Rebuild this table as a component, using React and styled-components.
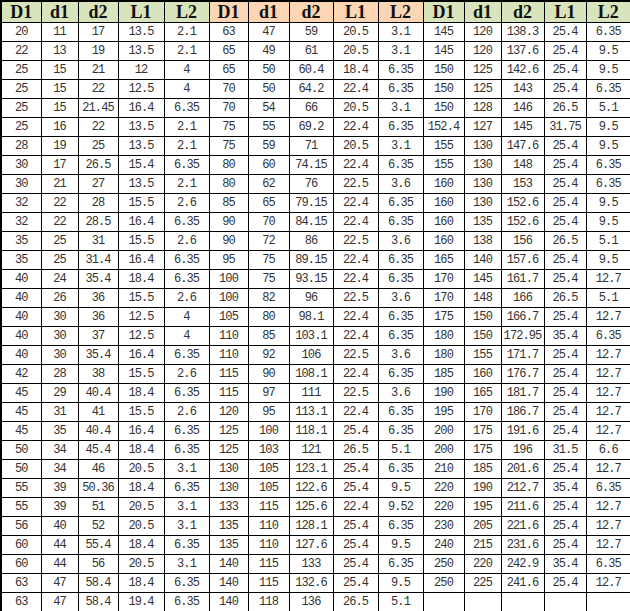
import styled, { createGlobalStyle } from 'styled-components';

const GlobalStyle = createGlobalStyle`
  html, body {
    margin: 0;
    padding: 0;
    background: #fff;
  }
`;

const widths = [40, 37, 40, 46, 45, 39, 41, 44, 45, 45, 41, 37, 43, 42, 45];
const heads = ['D1', 'd1', 'd2', 'L1', 'L2'];

const g1 = [
  ['20', '11', '17', '13.5', '2.1'],
  ['22', '13', '19', '13.5', '2.1'],
  ['25', '15', '21', '12', '4'],
  ['25', '15', '22', '12.5', '4'],
  ['25', '15', '21.45', '16.4', '6.35'],
  ['25', '16', '22', '13.5', '2.1'],
  ['28', '19', '25', '13.5', '2.1'],
  ['30', '17', '26.5', '15.4', '6.35'],
  ['30', '21', '27', '13.5', '2.1'],
  ['32', '22', '28', '15.5', '2.6'],
  ['32', '22', '28.5', '16.4', '6.35'],
  ['35', '25', '31', '15.5', '2.6'],
  ['35', '25', '31.4', '16.4', '6.35'],
  ['40', '24', '35.4', '18.4', '6.35'],
  ['40', '26', '36', '15.5', '2.6'],
  ['40', '30', '36', '12.5', '4'],
  ['40', '30', '37', '12.5', '4'],
  ['40', '30', '35.4', '16.4', '6.35'],
  ['42', '28', '38', '15.5', '2.6'],
  ['45', '29', '40.4', '18.4', '6.35'],
  ['45', '31', '41', '15.5', '2.6'],
  ['45', '35', '40.4', '16.4', '6.35'],
  ['50', '34', '45.4', '18.4', '6.35'],
  ['50', '34', '46', '20.5', '3.1'],
  ['55', '39', '50.36', '18.4', '6.35'],
  ['55', '39', '51', '20.5', '3.1'],
  ['56', '40', '52', '20.5', '3.1'],
  ['60', '44', '55.4', '18.4', '6.35'],
  ['60', '44', '56', '20.5', '3.1'],
  ['63', '47', '58.4', '18.4', '6.35'],
  ['63', '47', '58.4', '19.4', '6.35'],
];

const g2 = [
  ['63', '47', '59', '20.5', '3.1'],
  ['65', '49', '61', '20.5', '3.1'],
  ['65', '50', '60.4', '18.4', '6.35'],
  ['70', '50', '64.2', '22.4', '6.35'],
  ['70', '54', '66', '20.5', '3.1'],
  ['75', '55', '69.2', '22.4', '6.35'],
  ['75', '59', '71', '20.5', '3.1'],
  ['80', '60', '74.15', '22.4', '6.35'],
  ['80', '62', '76', '22.5', '3.6'],
  ['85', '65', '79.15', '22.4', '6.35'],
  ['90', '70', '84.15', '22.4', '6.35'],
  ['90', '72', '86', '22.5', '3.6'],
  ['95', '75', '89.15', '22.4', '6.35'],
  ['100', '75', '93.15', '22.4', '6.35'],
  ['100', '82', '96', '22.5', '3.6'],
  ['105', '80', '98.1', '22.4', '6.35'],
  ['110', '85', '103.1', '22.4', '6.35'],
  ['110', '92', '106', '22.5', '3.6'],
  ['115', '90', '108.1', '22.4', '6.35'],
  ['115', '97', '111', '22.5', '3.6'],
  ['120', '95', '113.1', '22.4', '6.35'],
  ['125', '100', '118.1', '25.4', '6.35'],
  ['125', '103', '121', '26.5', '5.1'],
  ['130', '105', '123.1', '25.4', '6.35'],
  ['130', '105', '122.6', '25.4', '9.5'],
  ['133', '115', '125.6', '22.4', '9.52'],
  ['135', '110', '128.1', '25.4', '6.35'],
  ['135', '110', '127.6', '25.4', '9.5'],
  ['140', '115', '133', '25.4', '6.35'],
  ['140', '115', '132.6', '25.4', '9.5'],
  ['140', '118', '136', '26.5', '5.1'],
];

const g3 = [
  ['145', '120', '138.3', '25.4', '6.35'],
  ['145', '120', '137.6', '25.4', '9.5'],
  ['150', '125', '142.6', '25.4', '9.5'],
  ['150', '125', '143', '25.4', '6.35'],
  ['150', '128', '146', '26.5', '5.1'],
  ['152.4', '127', '145', '31.75', '9.5'],
  ['155', '130', '147.6', '25.4', '9.5'],
  ['155', '130', '148', '25.4', '6.35'],
  ['160', '130', '153', '25.4', '6.35'],
  ['160', '130', '152.6', '25.4', '9.5'],
  ['160', '135', '152.6', '25.4', '9.5'],
  ['160', '138', '156', '26.5', '5.1'],
  ['165', '140', '157.6', '25.4', '9.5'],
  ['170', '145', '161.7', '25.4', '12.7'],
  ['170', '148', '166', '26.5', '5.1'],
  ['175', '150', '166.7', '25.4', '12.7'],
  ['180', '150', '172.95', '35.4', '6.35'],
  ['180', '155', '171.7', '25.4', '12.7'],
  ['185', '160', '176.7', '25.4', '12.7'],
  ['190', '165', '181.7', '25.4', '12.7'],
  ['195', '170', '186.7', '25.4', '12.7'],
  ['200', '175', '191.6', '25.4', '12.7'],
  ['200', '175', '196', '31.5', '6.6'],
  ['210', '185', '201.6', '25.4', '12.7'],
  ['220', '190', '212.7', '35.4', '6.35'],
  ['220', '195', '211.6', '25.4', '12.7'],
  ['230', '205', '221.6', '25.4', '12.7'],
  ['240', '215', '231.6', '25.4', '12.7'],
  ['250', '220', '242.9', '35.4', '6.35'],
  ['250', '225', '241.6', '25.4', '12.7'],
  ['', '', '', '', ''],
];

const rows = g1.map((r, i) => [...r, ...g2[i], ...g3[i]]);

const Table = styled.table`
  border-collapse: collapse;
  table-layout: fixed;
  width: 630px;
  border: 2px solid #000;
`;

const HeadCell = styled.th`
  height: 20px;
  padding: 0;
  border: 1px solid #000;
  background: ${(p) => (p.$orange ? '#fcd5b4' : '#d8e4bc')};
  font-family: "Liberation Serif", "Times New Roman", serif;
  font-weight: bold;
  font-size: 18px;
  line-height: 20px;
  color: #111;
  text-align: center;
`;

const Cell = styled.td`
  height: 18px;
  padding: 0;
  border: 1px solid #000;
  font-family: "Liberation Mono", "Courier New", monospace;
  font-size: 12px;
  letter-spacing: -0.9px;
  line-height: 18px;
  color: #333;
  text-align: center;
  white-space: nowrap;
  overflow: hidden;
`;

export default function App() {
  return (
    <>
      <GlobalStyle />
      <Table>
        <colgroup>
          {widths.map((w, i) => (
            <col key={i} style={{ width: w }} />
          ))}
        </colgroup>
        <thead>
          <tr>
            {[0, 1, 2].map((g) =>
              heads.map((h) => (
                <HeadCell key={g + h} $orange={g === 1}>
                  {h}
                </HeadCell>
              ))
            )}
          </tr>
        </thead>
        <tbody>
          {rows.map((r, i) => (
            <tr key={i}>
              {r.map((v, j) => (
                <Cell key={j}>{v}</Cell>
              ))}
            </tr>
          ))}
        </tbody>
      </Table>
    </>
  );
}
